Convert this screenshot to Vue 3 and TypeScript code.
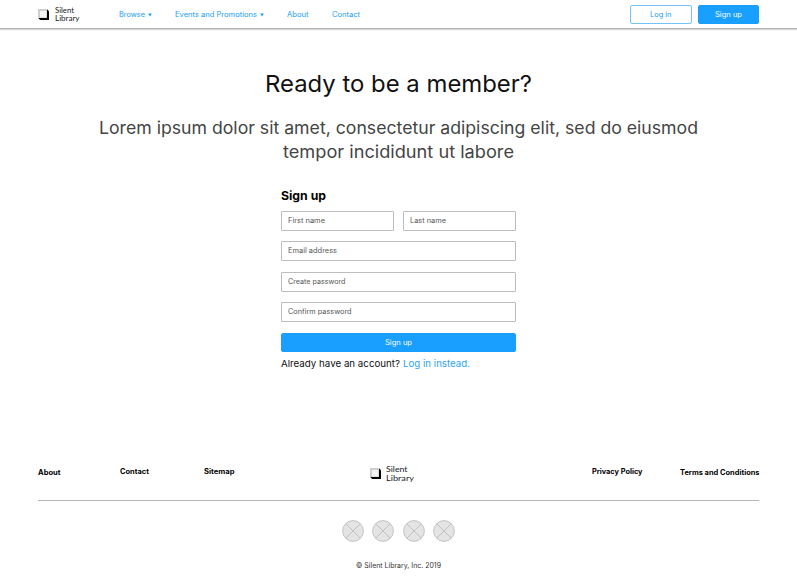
<script setup lang="ts">
import type { Directive } from 'vue'

interface NavItem {
  label: string
  width: number
  menu?: boolean
}

const navItems: NavItem[] = [
  { label: 'Browse', width: 26, menu: true },
  { label: 'Events and Promotions', width: 82, menu: true },
  { label: 'About', width: 21.5 },
  { label: 'Contact', width: 28 },
]

const fields = [
  { label: 'First name', width: 37, half: true },
  { label: 'Last name', width: 36, half: true },
  { label: 'Email address', width: 49, half: false },
  { label: 'Create password', width: 57.5, half: false },
  { label: 'Confirm password', width: 63.5, half: false },
]

// Widens the letters of a line of text so that it fills its measure.
const vMeasure: Directive<HTMLElement, number> = {
  mounted(el, { value }) {
    const natural = el.getBoundingClientRect().width
    el.style.transform = `scaleX(${value / natural})`
    el.style.marginRight = `${value - natural}px`
  },
}
</script>

<template>
  <div class="page">
    <header class="topbar">
      <a class="brand">
        <svg class="mark" viewBox="0 0 11 11">
          <path d="M2.2 11 0 8.8V0h8.8L11 2.2V11z" fill="#000" />
          <path d="M0 0h9v9H0z" fill="#cfcfcf" />
          <path d="M2 2h6.4v6.4H2z" fill="#f4f4f4" />
        </svg>
        <span class="brand-name">
          <span v-measure="19" class="text">Silent</span>
          <span v-measure="24.5" class="text">Library</span>
        </span>
      </a>
      <nav class="nav">
        <a v-for="item in navItems" :key="item.label" class="nav-link">
          <span v-measure="item.width" class="text">{{ item.label }}</span>
          <svg v-if="item.menu" class="caret" viewBox="0 0 4 4"><path d="M.2.4h3.6L2 3.6z" fill="#189cf8" /></svg>
        </a>
      </nav>
      <div class="actions">
        <button class="btn outline"><span v-measure="21.5" class="text">Log in</span></button>
        <button class="btn solid"><span v-measure="27" class="text">Sign up</span></button>
      </div>
    </header>

    <main class="main">
      <h1 class="title"><span v-measure="267" class="text">Ready to be a member?</span></h1>
      <p class="lead">
        <span v-measure="599" class="text">Lorem ipsum dolor sit amet, consectetur adipiscing elit, sed do eiusmod</span>
        <span v-measure="231" class="text">tempor incididunt ut labore</span>
      </p>
      <form class="form" @submit.prevent>
        <h2 class="form-title"><span v-measure="45" class="text">Sign up</span></h2>
        <div class="fields">
          <label v-for="field in fields" :key="field.label" class="field" :class="{ half: field.half }">
            <span v-measure="field.width" class="text">{{ field.label }}</span>
          </label>
        </div>
        <button class="btn solid submit"><span v-measure="27" class="text">Sign up</span></button>
        <p class="switch">
          <span v-measure="119" class="text">Already have an account?</span>
          <a v-measure="67" class="text link">Log in instead.</a>
        </p>
      </form>
    </main>

    <footer class="footer">
      <div class="footer-links">
        <div class="group left">
          <a v-measure="22.5" class="text low">About</a>
          <a v-measure="29" class="text">Contact</a>
          <a v-measure="30.5" class="text">Sitemap</a>
        </div>
        <a class="brand footer-brand">
          <svg class="mark" viewBox="0 0 11 11">
            <path d="M2.2 11 0 8.8V0h8.8L11 2.2V11z" fill="#000" />
            <path d="M0 0h9v9H0z" fill="#cfcfcf" />
            <path d="M2 2h6.4v6.4H2z" fill="#f4f4f4" />
          </svg>
          <span class="brand-name">
            <span v-measure="21.5" class="text">Silent</span>
            <span v-measure="28" class="text">Library</span>
          </span>
        </a>
        <div class="group right">
          <a v-measure="50.5" class="text">Privacy Policy</a>
          <a v-measure="79.5" class="text low">Terms and Conditions</a>
        </div>
      </div>
      <div class="social">
        <svg v-for="n in 4" :key="n" class="social-icon" viewBox="0 0 22 22">
          <circle cx="11" cy="11" r="10.4" fill="#e4e4e4" stroke="#b8b8b8" stroke-width=".8" />
          <path d="M3.7 3.7l14.6 14.6M18.3 3.7L3.7 18.3" stroke="#b8b8b8" stroke-width=".8" />
        </svg>
      </div>
      <p class="copyright"><span v-measure="85" class="text">© Silent Library, Inc. 2019</span></p>
    </footer>
  </div>
</template>

<style>
body {
  margin: 0;
  background: #fff;
}
</style>

<style scoped>
.page {
  box-sizing: border-box;
  height: 576px;
  display: flex;
  flex-direction: column;
  overflow: hidden;
  font-family: Inter, "Liberation Sans", sans-serif;
  font-size: 7px;
  color: #000;
  background: #fff;
}

h1,
h2,
p {
  margin: 0;
  font-weight: 400;
}

.text {
  display: inline-block;
  white-space: nowrap;
  transform-origin: left center;
}

.topbar {
  box-sizing: border-box;
  height: 28px;
  flex: none;
  padding: 0 38px;
  display: flex;
  align-items: center;
  box-shadow: 0 1px 1px #b4b4b4, 0 2px 1px #ddd;
}

.brand {
  display: flex;
  align-items: center;
  gap: 5.5px;
  width: 81px;
}

.mark {
  flex: none;
  width: 11px;
  height: 11px;
}

.brand-name {
  display: flex;
  flex-direction: column;
  align-items: flex-start;
  padding-top: 1px;
  font-family: Lato, sans-serif;
  font-size: 7.5px;
  line-height: 7.8px;
  color: #222;
}

.nav {
  display: flex;
  gap: 23.5px;
  padding-top: 1px;
  line-height: 10px;
  color: #189cf8;
}

.nav-link {
  display: flex;
  align-items: center;
  gap: 2.5px;
}

.caret {
  width: 4px;
  height: 4px;
}

.actions {
  margin-left: auto;
  display: flex;
  gap: 6px;
}

.btn {
  box-sizing: border-box;
  width: 61.5px;
  height: 19px;
  padding: 1px 0 0;
  border: 1px solid #189fff;
  border-radius: 2px;
  font: inherit;
  line-height: 10px;
  text-align: center;
}

.outline {
  border-color: #74c3fb;
  color: #189cf8;
  background: #fff;
}

.solid {
  color: #fff;
  background: #189fff;
}

.main {
  flex: 1;
  display: flex;
  flex-direction: column;
  align-items: center;
}

.title {
  margin-top: 41px;
  font-size: 23.5px;
  line-height: 30px;
  color: #111;
}

.lead {
  margin-top: 17px;
  display: flex;
  flex-direction: column;
  align-items: center;
  font-size: 17.3px;
  font-weight: 400;
  line-height: 24px;
  color: #444;
}

.form {
  width: 235px;
  margin-top: 25px;
}

.form-title {
  font-size: 12px;
  font-weight: 700;
  line-height: 14px;
}

.fields {
  margin-top: 8px;
  display: grid;
  grid-template-columns: 1fr 1fr;
  column-gap: 9px;
  row-gap: 10.4px;
}

.field {
  box-sizing: border-box;
  grid-column: span 2;
  height: 20px;
  padding-left: 6px;
  border: 1px solid #bdbdbd;
  border-radius: 1px;
  line-height: 18px;
  color: #555;
}

.half {
  grid-column: span 1;
}

.submit {
  display: block;
  width: 235px;
  margin-top: 10.5px;
}

.switch {
  margin-top: 5.5px;
  display: flex;
  gap: 2.5px;
  font-size: 9.5px;
  line-height: 13px;
  color: #111;
}

.link {
  color: #2ca4f2;
}

.footer {
  flex: none;
  height: 116px;
  margin: 0 38px;
}

.footer-links {
  box-sizing: border-box;
  height: 41px;
  display: grid;
  grid-template-columns: 331.5px auto 1fr;
  border-bottom: 1px solid #b5b5b5;
  font-weight: 700;
}

.group {
  display: flex;
  padding-top: 7px;
  line-height: 10px;
}

.left {
  gap: 59.5px;
}

.left .text:nth-child(3) {
  padding-left: 0;
  margin-left: -5px;
}

.right {
  justify-content: flex-end;
  gap: 37px;
}

.low {
  padding-top: 0.5px;
}

.footer-brand {
  width: auto;
  height: 27px;
  font-weight: 400;
}

.footer-brand .brand-name {
  padding-top: 0;
  font-size: 8.3px;
  line-height: 8.7px;
}

.social {
  margin-top: 18.5px;
  display: flex;
  justify-content: center;
  gap: 8.5px;
}

.social-icon {
  width: 22px;
  height: 22px;
}

.copyright {
  margin-top: 19px;
  text-align: center;
  line-height: 10px;
  color: #333;
}
</style>
